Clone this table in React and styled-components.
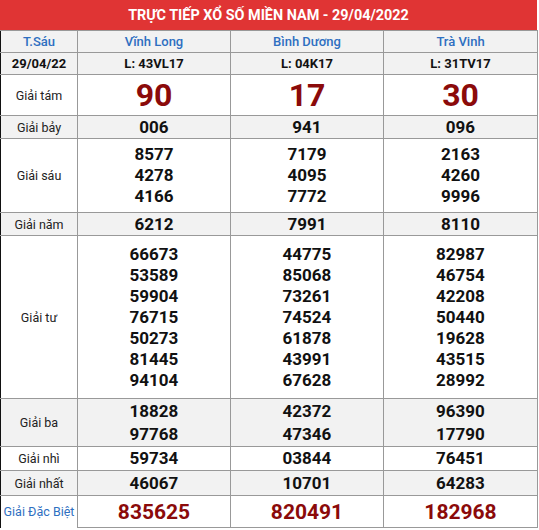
import styled, { createGlobalStyle } from 'styled-components'

const GlobalStyle = createGlobalStyle`
  body {
    margin: 0;
    background: #fff;
    font-family: Roboto, 'Liberation Sans', sans-serif;
  }
`

const Wrapper = styled.div`
  width: 537px;
`

const Title = styled.div`
  height: 30px;
  background: #e03434;
  color: #fff;
  font-size: 14.4px;
  font-weight: 700;
  display: flex;
  align-items: center;
  justify-content: center;
`

const Table = styled.table`
  width: 537px;
  border-collapse: collapse;
  table-layout: fixed;
  border-left: 1px solid #111;
`

const Row = styled.tr`
  height: ${({ h }) => h}px;
  background: ${({ shaded }) => (shaded ? '#f2f2f2' : '#fff')};
`

const Cell = styled.td`
  border: 1px solid #999;
  text-align: center;
  vertical-align: middle;
  padding: 0;
`

const HeadCell = styled(Cell)`
  color: ${({ blue }) => (blue ? '#2e6fc1' : '#111')};
  font-size: 13px;
  font-weight: ${({ blue }) => (blue ? 500 : 700)};
`

const Label = styled(Cell)`
  font-size: 12.5px;
  color: ${({ special }) => (special ? '#2e6fc1' : '#222')};
  border-left: none;
  ${({ last }) => last && 'border-bottom: none;'}
`

const Number = styled.div`
  font-size: ${({ size }) => size}px;
  font-weight: 700;
  line-height: ${({ lh }) => lh}px;
  color: ${({ red }) => (red ? '#8b0a0a' : '#111')};
`

const provinces = [
  { name: 'Vĩnh Long', code: 'L: 43VL17' },
  { name: 'Bình Dương', code: 'L: 04K17' },
  { name: 'Trà Vinh', code: 'L: 31TV17' },
]

const prizes = [
  { label: 'Giải tám', h: 41, size: 32, lh: 36, red: true, values: [['90'], ['17'], ['30']] },
  { label: 'Giải bảy', h: 23, shaded: true, values: [['006'], ['941'], ['096']] },
  {
    label: 'Giải sáu',
    h: 74,
    values: [
      ['8577', '4278', '4166'],
      ['7179', '4095', '7772'],
      ['2163', '4260', '9996'],
    ],
  },
  { label: 'Giải năm', h: 23, shaded: true, values: [['6212'], ['7991'], ['8110']] },
  {
    label: 'Giải tư',
    h: 163,
    values: [
      ['66673', '53589', '59904', '76715', '50273', '81445', '94104'],
      ['44775', '85068', '73261', '74524', '61878', '43991', '67628'],
      ['82987', '46754', '42208', '50440', '19628', '43515', '28992'],
    ],
  },
  {
    label: 'Giải ba',
    h: 48,
    lh: 23,
    shaded: true,
    values: [
      ['18828', '97768'],
      ['42372', '47346'],
      ['96390', '17790'],
    ],
  },
  { label: 'Giải nhì', h: 24, values: [['59734'], ['03844'], ['76451']] },
  { label: 'Giải nhất', h: 25, shaded: true, values: [['46067'], ['10701'], ['64283']] },
  {
    label: 'Giải Đặc Biệt',
    h: 32,
    size: 21,
    lh: 24,
    red: true,
    special: true,
    values: [['835625'], ['820491'], ['182968']],
  },
]

const App = () => (
  <Wrapper>
    <GlobalStyle />
    <Title>TRỰC TIẾP XỔ SỐ MIỀN NAM - 29/04/2022</Title>
    <Table>
      <colgroup>
        <col style={{ width: 77 }} />
        <col style={{ width: 153 }} />
        <col style={{ width: 153 }} />
        <col style={{ width: 154 }} />
      </colgroup>
      <tbody>
        <Row h={22} shaded>
          <HeadCell blue style={{ borderLeft: 'none' }}>T.Sáu</HeadCell>
          {provinces.map((p) => (
            <HeadCell blue key={p.name}>{p.name}</HeadCell>
          ))}
        </Row>
        <Row h={22} shaded>
          <HeadCell style={{ borderLeft: 'none' }}>29/04/22</HeadCell>
          {provinces.map((p) => (
            <HeadCell key={p.code}>{p.code}</HeadCell>
          ))}
        </Row>
        {prizes.map((p, i) => (
          <Row key={p.label} h={p.h} shaded={p.shaded}>
            <Label special={p.special} last={i === prizes.length - 1}>
              {p.label}
            </Label>
            {p.values.map((col, j) => (
              <Cell key={j}>
                {col.map((n) => (
                  <Number key={n} size={p.size || 17} lh={p.lh || 21} red={p.red}>
                    {n}
                  </Number>
                ))}
              </Cell>
            ))}
          </Row>
        ))}
      </tbody>
    </Table>
  </Wrapper>
)

export default App
